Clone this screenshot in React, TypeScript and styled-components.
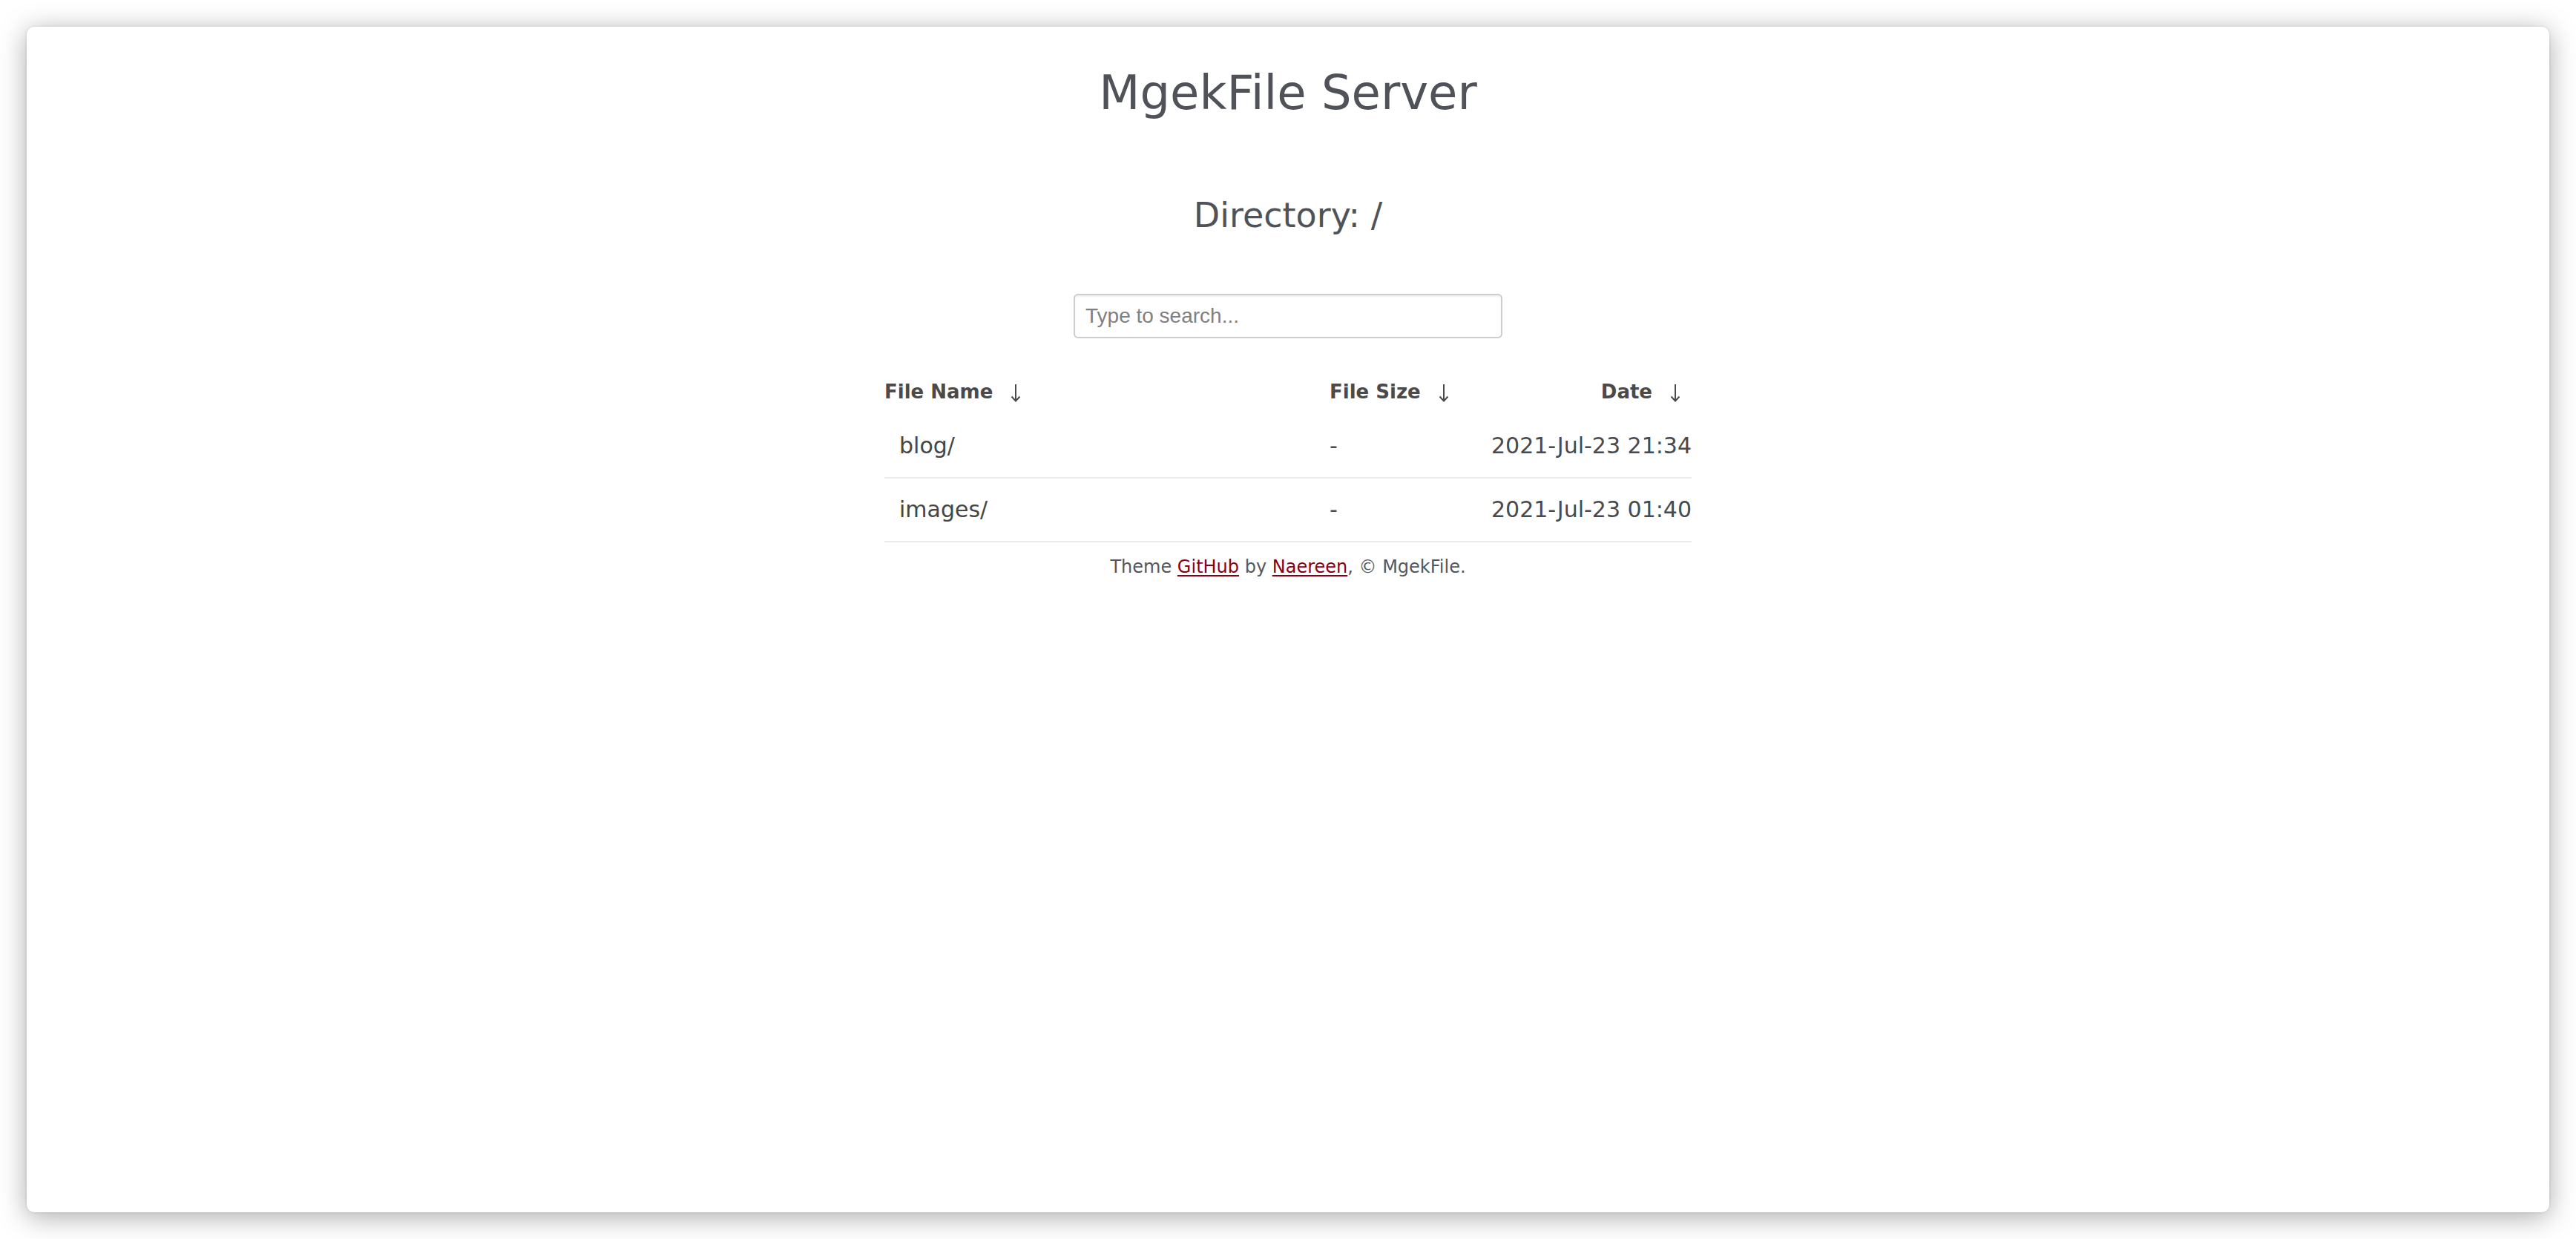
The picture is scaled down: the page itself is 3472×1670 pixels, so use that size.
import React from "react";
import styled, { createGlobalStyle } from "styled-components";

const GlobalStyle = createGlobalStyle`
  html, body {
    margin: 0;
    padding: 0;
    background: #ffffff;
  }
  body {
    font-family: "DejaVu Sans", Verdana, sans-serif;
  }
  input::placeholder {
    color: #808080;
    opacity: 1;
  }
`;

const Page = styled.div`
  box-sizing: border-box;
  width: 100%;
  height: 1670px;
  padding: 36px;
`;

const Card = styled.main`
  box-sizing: border-box;
  height: 1598px;
  background: #ffffff;
  border-radius: 10px;
  box-shadow: 0 6px 36px rgba(0, 0, 0, 0.34), 0 0 3px rgba(0, 0, 0, 0.14);
  display: flex;
  flex-direction: column;
  align-items: center;
`;

const Title = styled.h1`
  margin: 51px 0 0;
  font-size: 64px;
  line-height: 76px;
  font-weight: normal;
  color: #4f5258;
`;

const DirTitle = styled.h2`
  margin: 100px 0 0;
  font-size: 46px;
  line-height: 54px;
  font-weight: normal;
  color: #4f5258;
`;

const SearchInput = styled.input`
  box-sizing: border-box;
  margin-top: 79px;
  width: 578px;
  height: 60px;
  padding: 0 14px;
  border: 2px solid #cdcdcd;
  border-radius: 6px;
  box-shadow: inset 0 2px 2px rgba(0, 0, 0, 0.06);
  font-family: "Liberation Sans", Arial, sans-serif;
  font-size: 28px;
  color: #333;
  outline: none;
`;

const Table = styled.div`
  margin-top: 47px;
  width: 1088px;
`;

const GridRow = styled.div`
  display: grid;
  grid-template-columns: 600px 1fr auto;
  align-items: center;
`;

const HeaderRow = styled(GridRow)`
  padding: 10px 0 16px;
  font-size: 26px;
  line-height: 30px;
  font-weight: bold;
  color: #4a4a4a;
`;

const HeadCell = styled.div<{ $right?: boolean }>`
  display: flex;
  align-items: center;
  justify-content: ${(p) => (p.$right ? "flex-end" : "flex-start")};
`;

const Arrow = styled.svg`
  display: block;
  width: 14px;
  height: 25px;
  margin: 2px 15px 0 24px;
`;

const Row = styled(GridRow)`
  padding: 24px 0;
  border-bottom: 2px solid #e9edf0;
  font-size: 30px;
  line-height: 36px;
`;

const NameCell = styled.a`
  padding-left: 20px;
  color: #464646;
  text-decoration: none;
`;

const SizeCell = styled.div`
  color: #4a4d52;
`;

const DateCell = styled.div`
  text-align: right;
  color: #474a50;
`;

const Footer = styled.footer`
  margin-top: 19px;
  font-size: 24px;
  line-height: 28px;
  color: #54575d;
`;

const FooterLink = styled.a`
  color: #8a0012;
  text-decoration: underline;
  text-underline-offset: 3px;
  text-decoration-thickness: 2px;
`;

const SortArrow = () => (
  <Arrow viewBox="0 0 14 25" aria-hidden="true">
    <path
      d="M7 1 V23.5 M1.5 17.5 L7 23.5 L12.5 17.5"
      fill="none"
      stroke="#4a4a4a"
      strokeWidth="2"
    />
  </Arrow>
);

const files = [
  { name: "blog/", size: "-", date: "2021-Jul-23 21:34" },
  { name: "images/", size: "-", date: "2021-Jul-23 01:40" },
];

export default function App() {
  return (
    <>
      <GlobalStyle />
      <Page>
        <Card>
          <Title>MgekFile Server</Title>
          <DirTitle>Directory: /</DirTitle>
          <SearchInput type="text" placeholder="Type to search..." />
          <Table>
            <HeaderRow>
              <HeadCell>
                File Name
                <SortArrow />
              </HeadCell>
              <HeadCell>
                File Size
                <SortArrow />
              </HeadCell>
              <HeadCell $right>
                Date
                <SortArrow />
              </HeadCell>
            </HeaderRow>
            {files.map((f) => (
              <Row key={f.name}>
                <NameCell href="#">{f.name}</NameCell>
                <SizeCell>{f.size}</SizeCell>
                <DateCell>{f.date}</DateCell>
              </Row>
            ))}
          </Table>
          <Footer>
            Theme <FooterLink href="#">GitHub</FooterLink> by{" "}
            <FooterLink href="#">Naereen</FooterLink>, © MgekFile.
          </Footer>
        </Card>
      </Page>
    </>
  );
}
